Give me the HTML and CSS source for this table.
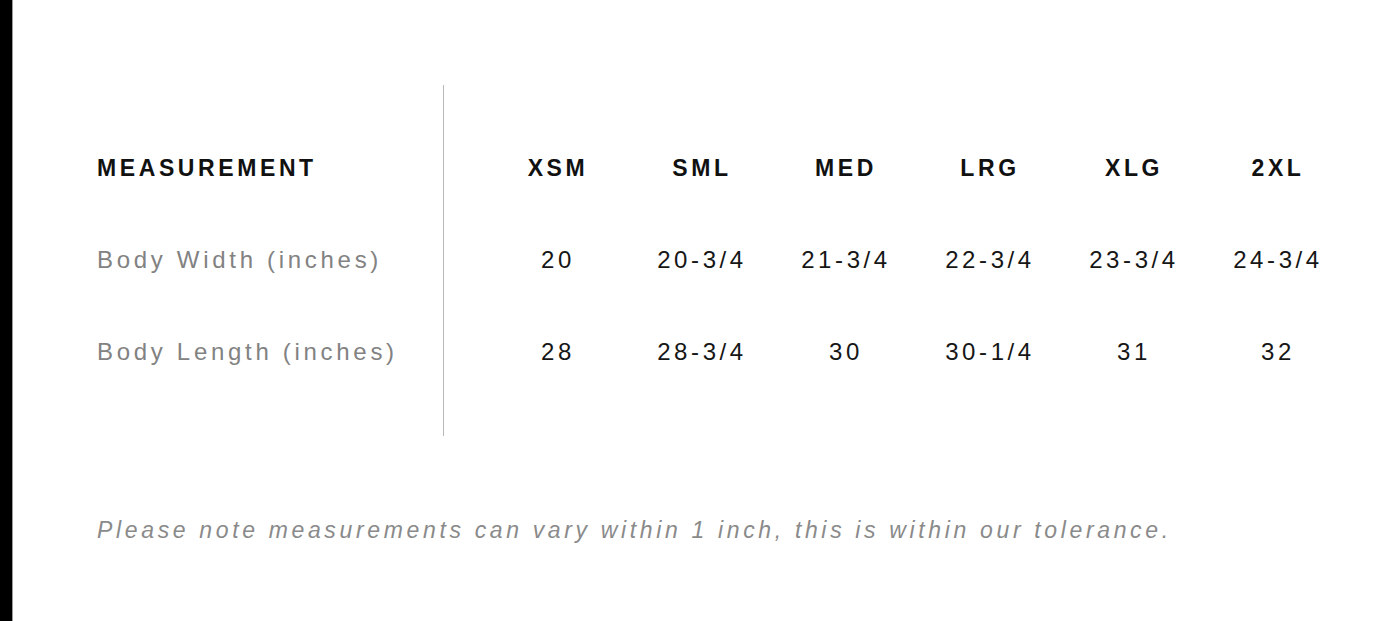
FILE: index.html
```html
<!DOCTYPE html>
<html lang="en">
<head>
<meta charset="utf-8">
<title>Size Chart</title>
<link rel="stylesheet" href="styles.css">
</head>
<body>
<div class="page">
  <div class="edge"></div>
  <main class="content">
    <div class="chart">
      <div class="labels">
        <div class="cell head">MEASUREMENT</div>
        <div class="cell label">Body Width (inches)</div>
        <div class="cell label">Body Length (inches)</div>
      </div>
      <div class="sizes">
        <div class="cell head c">XSM</div>
        <div class="cell head c">SML</div>
        <div class="cell head c">MED</div>
        <div class="cell head c">LRG</div>
        <div class="cell head c">XLG</div>
        <div class="cell head c">2XL</div>
        <div class="cell val">20</div>
        <div class="cell val">20-3/4</div>
        <div class="cell val">21-3/4</div>
        <div class="cell val">22-3/4</div>
        <div class="cell val">23-3/4</div>
        <div class="cell val">24-3/4</div>
        <div class="cell val">28</div>
        <div class="cell val">28-3/4</div>
        <div class="cell val">30</div>
        <div class="cell val">30-1/4</div>
        <div class="cell val">31</div>
        <div class="cell val">32</div>
      </div>
    </div>
    <p class="note">Please note measurements can vary within 1 inch, this is within our tolerance.</p>
  </main>
</div>
</body>
</html>
```

FILE: styles.css
```css
html, body {
  margin: 0;
  padding: 0;
  background: #fff;
}
body {
  font-family: "Liberation Sans", Arial, Helvetica, sans-serif;
}
.page {
  display: flex;
  min-height: 621px;
}
.edge {
  width: 12px;
  flex: none;
  background: #000;
  border-right: 1px solid #9a9a9a;
}
.content {
  flex: 1;
  padding: 85px 0 0 84px;
}
.chart {
  display: flex;
}
.labels {
  width: 346px;
  border-right: 1px solid #b8b8b8;
  padding: 37px 0 38px;
  display: flex;
  flex-direction: column;
}
.sizes {
  margin-left: 42px;
  padding: 37px 0 38px;
  display: grid;
  grid-template-columns: repeat(6, 144px);
  grid-auto-rows: 92px;
}
.cell {
  height: 92px;
  display: flex;
  align-items: center;
  white-space: nowrap;
}
.sizes .cell {
  justify-content: center;
}
.head {
  font-weight: 700;
  font-size: 23px;
  letter-spacing: 3.6px;
  color: #111;
}
.label {
  font-size: 24px;
  letter-spacing: 3.7px;
  color: #828282;
}
.val {
  font-size: 24px;
  letter-spacing: 3.6px;
  color: #161616;
}
.note {
  margin: 79px 0 0;
  line-height: 30px;
  font-size: 23px;
  font-style: italic;
  letter-spacing: 3.65px;
  color: #8a8a8a;
  white-space: nowrap;
}
```
